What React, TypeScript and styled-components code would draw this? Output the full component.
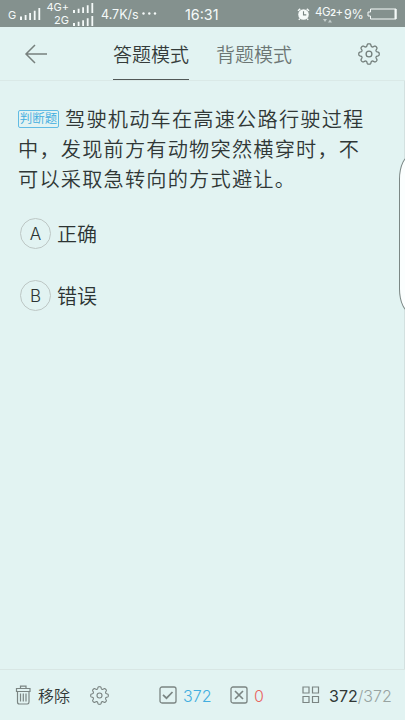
import React from "react";
import styled, { createGlobalStyle } from "styled-components";

const GlobalStyle = createGlobalStyle`
  * { box-sizing: border-box; }
  body { margin: 0; background: #e2f3f2; overflow: hidden; }
`;

const Screen = styled.div`
  position: relative;
  display: flex;
  flex-direction: column;
  width: 405px;
  height: 720px;
  overflow: hidden;
  background: #e2f3f2;
  color: #2c3333;
  font-family: Inter, "Noto Sans CJK SC", sans-serif;
  font-weight: 350;
  white-space: nowrap;
  svg { display: block; flex: none; }
`;

const StatusBar = styled.header`
  display: flex;
  align-items: center;
  height: 27px;
  flex: none;
  padding-left: 8px;
  background: #84918e;
  color: #f5faf9;
  font-weight: 400;
`;

const StatusText = styled.span<{ $size: number; $width: number; $gap?: number; $spacing?: number }>`
  flex: none;
  width: ${(p) => p.$width}px;
  margin-left: ${(p) => p.$gap ?? 0}px;
  font-size: ${(p) => p.$size}px;
  letter-spacing: ${(p) => p.$spacing ?? 0}px;
  line-height: 20px;
  padding-top: 2px;
`;

const DualSim = styled.div`
  display: flex;
  flex: none;
  flex-direction: column;
  width: 53px;
`;

const SimRow = styled.div`
  display: flex;
  align-items: center;
  justify-content: flex-end;
  gap: 4px;
  height: 13px;
  padding-top: 1px;
  font-size: 11px;
  line-height: 13px;
`;

const NetworkBadge = styled.div`
  display: flex;
  flex: none;
  flex-direction: column;
  width: 28px;
  margin-left: 5px;
  font-size: 11.5px;
  letter-spacing: -0.4px;
  line-height: 14px;
  small { font-size: 9px; font-weight: 700; }
  svg { margin: -1px 0 0 8px; }
`;

const TopBar = styled.nav`
  display: flex;
  height: 54px;
  flex: none;
  border-bottom: 1px solid #dae9e7;
`;

const BackButton = styled.div`
  width: 113px;
  padding: 17px 0 0 24px;
`;

const Tab = styled.div<{ $active?: boolean }>`
  width: 76px;
  height: 53px;
  margin-right: 27px;
  padding-top: 15px;
  border-bottom: ${(p) => (p.$active ? "1.5px solid #515857" : "0")};
  color: ${(p) => (p.$active ? "#343b3a" : "#6c7674")};
  font-size: 19px;
  line-height: 28px;
`;

const SettingsButton = styled.div`
  padding: 16px 0 0 39px;
`;

const Content = styled.main`
  flex: 1;
  padding: 24px 0 0 18px;
`;

const Question = styled.div`
  font-size: 20.2px;
  letter-spacing: 1.2px;
  line-height: 30px;
  color: #303736;
`;

const Line = styled.div`
  display: flex;
  align-items: center;
  height: 30px;
`;

const TypeTag = styled.span`
  width: 41px;
  height: 18px;
  margin: -2px 6px 0 0;
  border: 1px solid #62bce4;
  border-radius: 2px;
  color: #3eade0;
  font-size: 12.5px;
  line-height: 16px;
  letter-spacing: 0;
  text-align: center;
`;

const Options = styled.div`
  display: flex;
  flex-direction: column;
  gap: 31px;
  padding: 23px 0 0 2px;
`;

const Option = styled.div`
  display: flex;
  align-items: center;
  gap: 6px;
  height: 31px;
  font-size: 20px;
`;

const Answer = styled.span`
  padding-top: 3px;
  line-height: 31px;
`;

const Letter = styled.span`
  width: 31px;
  height: 31px;
  border: 1px solid #bdc7c5;
  border-radius: 50%;
  text-align: center;
  font-size: 17px;
  line-height: 30px;
`;

const BottomBar = styled.footer`
  display: flex;
  align-items: center;
  height: 51px;
  flex: none;
  padding-left: 15px;
  border-top: 1px solid #d8e6e4;
`;

const BarText = styled.span<{ $tone?: string; $width: number; $gap?: number }>`
  width: ${(p) => p.$width}px;
  margin-left: ${(p) => p.$gap ?? 6}px;
  padding-top: 1px;
  color: ${(p) => p.$tone ?? "#303736"};
  font-size: 16px;
  line-height: 24px;
`;

const Current = styled.span`
  font-weight: 400;
`;

const Total = styled.span`
  color: #98a3a1;
`;

const FooterSettings = styled.div`
  width: 69px;
`;

const EdgeHandle = styled.div`
  position: absolute;
  left: 399px;
  top: 155px;
  width: 24px;
  height: 158px;
  border: 1px solid #7b8785;
  border-radius: 12px / 24px;
  background: #fbfefe;
`;

const ScreenEdge = styled.div`
  position: absolute;
  top: 81px;
  right: 0;
  width: 1px;
  height: 588px;
  background: #d3e1e0;
`;

const AlarmIcon = styled.svg`
  margin-left: 77px;
`;

const Battery = styled.svg`
  margin-left: 3px;
`;

function Signal({ height = 12 }: { height?: number }) {
  return (
    <svg width={21} height={height} viewBox="0 0 21 12" fill="#f5faf9" preserveAspectRatio="none">
      <path d="M0 8.5h2V12H0zM4.7 7h1.8v5H4.7zM9.2 5H11v7H9.2zM13.8 2.8h1.8V12h-1.8zM18.4 0h1.8v12h-1.8z" />
    </svg>
  );
}

const gearOutline = Array.from({ length: 160 }, (_, i) => {
  const angle = (i / 160) * Math.PI * 2;
  const wave = Math.cos(angle * 8);
  const radius = 8.9 + 1.35 * Math.tanh(wave * 1.7 + 0.35);
  return `${i ? "L" : "M"}${(11 + radius * Math.cos(angle)).toFixed(2)} ${(11 + radius * Math.sin(angle)).toFixed(2)}`;
}).join("") + "Z";

function Gear({ size, stroke }: { size: number; stroke: string }) {
  return (
    <svg width={size} height={size} viewBox="0 0 22 22" fill="none" stroke={stroke} strokeWidth="1.3" strokeLinejoin="round">
      <path d={gearOutline} />
      <circle cx="11" cy="11" r="2.9" />
    </svg>
  );
}

function AnswerBox({ wrong }: { wrong?: boolean }) {
  return (
    <svg width="18" height="18" viewBox="0 0 18 18" fill="none" stroke="#7b8583">
      <rect x="1" y="1" width="16" height="16" rx="2" strokeWidth="1.3" />
      <path d={wrong ? "M5 5l8 8M13 5l-8 8" : "M4 8.8l3.5 3.4L13.5 6"} strokeWidth="1.7" />
    </svg>
  );
}

export default function App() {
  return (
    <>
      <GlobalStyle />
      <Screen>
        <StatusBar>
          <StatusText $size={11} $width={12}>G</StatusText>
          <Signal />
          <DualSim>
            <SimRow>4G+ <Signal height={10} /></SimRow>
            <SimRow>2G <Signal height={10} /></SimRow>
          </DualSim>
          <StatusText $size={12.5} $width={40} $gap={7}>4.7K/s</StatusText>
          <svg width="16" height="3" viewBox="0 0 16 3" fill="#f5faf9">
            <circle cx="2.5" cy="1.5" r="1.2" /><circle cx="8.3" cy="1.5" r="1.2" /><circle cx="14" cy="1.5" r="1.2" />
          </svg>
          <StatusText $size={14.3} $width={35} $gap={28}>16:31</StatusText>
          <AlarmIcon width="13" height="14" viewBox="0 0 14 14">
            <circle cx="7" cy="7.5" r="5.7" fill="#f5faf9" />
            <path d="M1 3.5l2.5-2M13 3.5l-2.5-2M3 12l-1 1.3M11 12l1 1.3" stroke="#f5faf9" strokeWidth="1.5" />
            <path d="M7 4v4h3" fill="none" stroke="#788582" strokeWidth="1.2" />
          </AlarmIcon>
          <NetworkBadge>
            <span>4G<small>2</small>+</span>
            <svg width="9" height="4" viewBox="0 0 9 4" fill="#c4cecc"><path d="M0 0h4L2 3zM5 3.5h4l-2-3z" /></svg>
          </NetworkBadge>
          <StatusText $size={12.5} $width={20} $gap={1} $spacing={-0.2}>9%</StatusText>
          <Battery width="30" height="12" viewBox="0 0 30 12" fill="none" stroke="#f5faf9">
            <path d="M3.5 1H29v10H3.5V8H1V4h2.5z" /><path d="M28.5 1v10" strokeWidth="2" />
          </Battery>
        </StatusBar>

        <TopBar>
          <BackButton>
            <svg width="24" height="20" viewBox="0 0 24 20" fill="none" stroke="#77807e" strokeWidth="1.5">
              <path d="M11 1L2 10l9 9M2 10h21" />
            </svg>
          </BackButton>
          <Tab $active>答题模式</Tab>
          <Tab>背题模式</Tab>
          <SettingsButton><Gear size={22} stroke="#727d7a" /></SettingsButton>
        </TopBar>

        <Content>
          <Question>
            <Line><TypeTag>判断题</TypeTag>驾驶机动车在高速公路行驶过程</Line>
            <Line>中，发现前方有动物突然横穿时，不</Line>
            <Line>可以采取急转向的方式避让。</Line>
          </Question>
          <Options>
            <Option><Letter>A</Letter><Answer>正确</Answer></Option>
            <Option><Letter>B</Letter><Answer>错误</Answer></Option>
          </Options>
        </Content>

        <BottomBar>
          <svg width="17" height="20" viewBox="0 0 17 20" fill="none" stroke="#7b8583" strokeWidth="1.2">
            <path d="M1.5 3.5H15v3H1.5zM5.5 3.5V1.2H11v2.3M2.5 6.5V17q0 2 1.8 2h8q1.7 0 1.7-2V6.5M5.5 8.5v8M8.3 8.5v8M11 8.5v8" />
          </svg>
          <BarText $width={52}>移除</BarText>
          <FooterSettings><Gear size={19} stroke="#7b8583" /></FooterSettings>
          <AnswerBox />
          <BarText $tone="#42aedf" $width={47}>372</BarText>
          <AnswerBox wrong />
          <BarText $tone="#e9645f" $width={48}>0</BarText>
          <svg width="18" height="18" viewBox="0 0 18 18" fill="none" stroke="#7b8583" strokeWidth="1.2">
            <path d="M1 1h6v6H1zM10.5 1h6v6h-6zM1 10.5h6v6H1zM10.5 10.5h6v6h-6z" />
          </svg>
          <BarText $width={70} $gap={9}><Current>372</Current><Total>/372</Total></BarText>
        </BottomBar>
        <ScreenEdge />
        <EdgeHandle />
      </Screen>
    </>
  );
}
